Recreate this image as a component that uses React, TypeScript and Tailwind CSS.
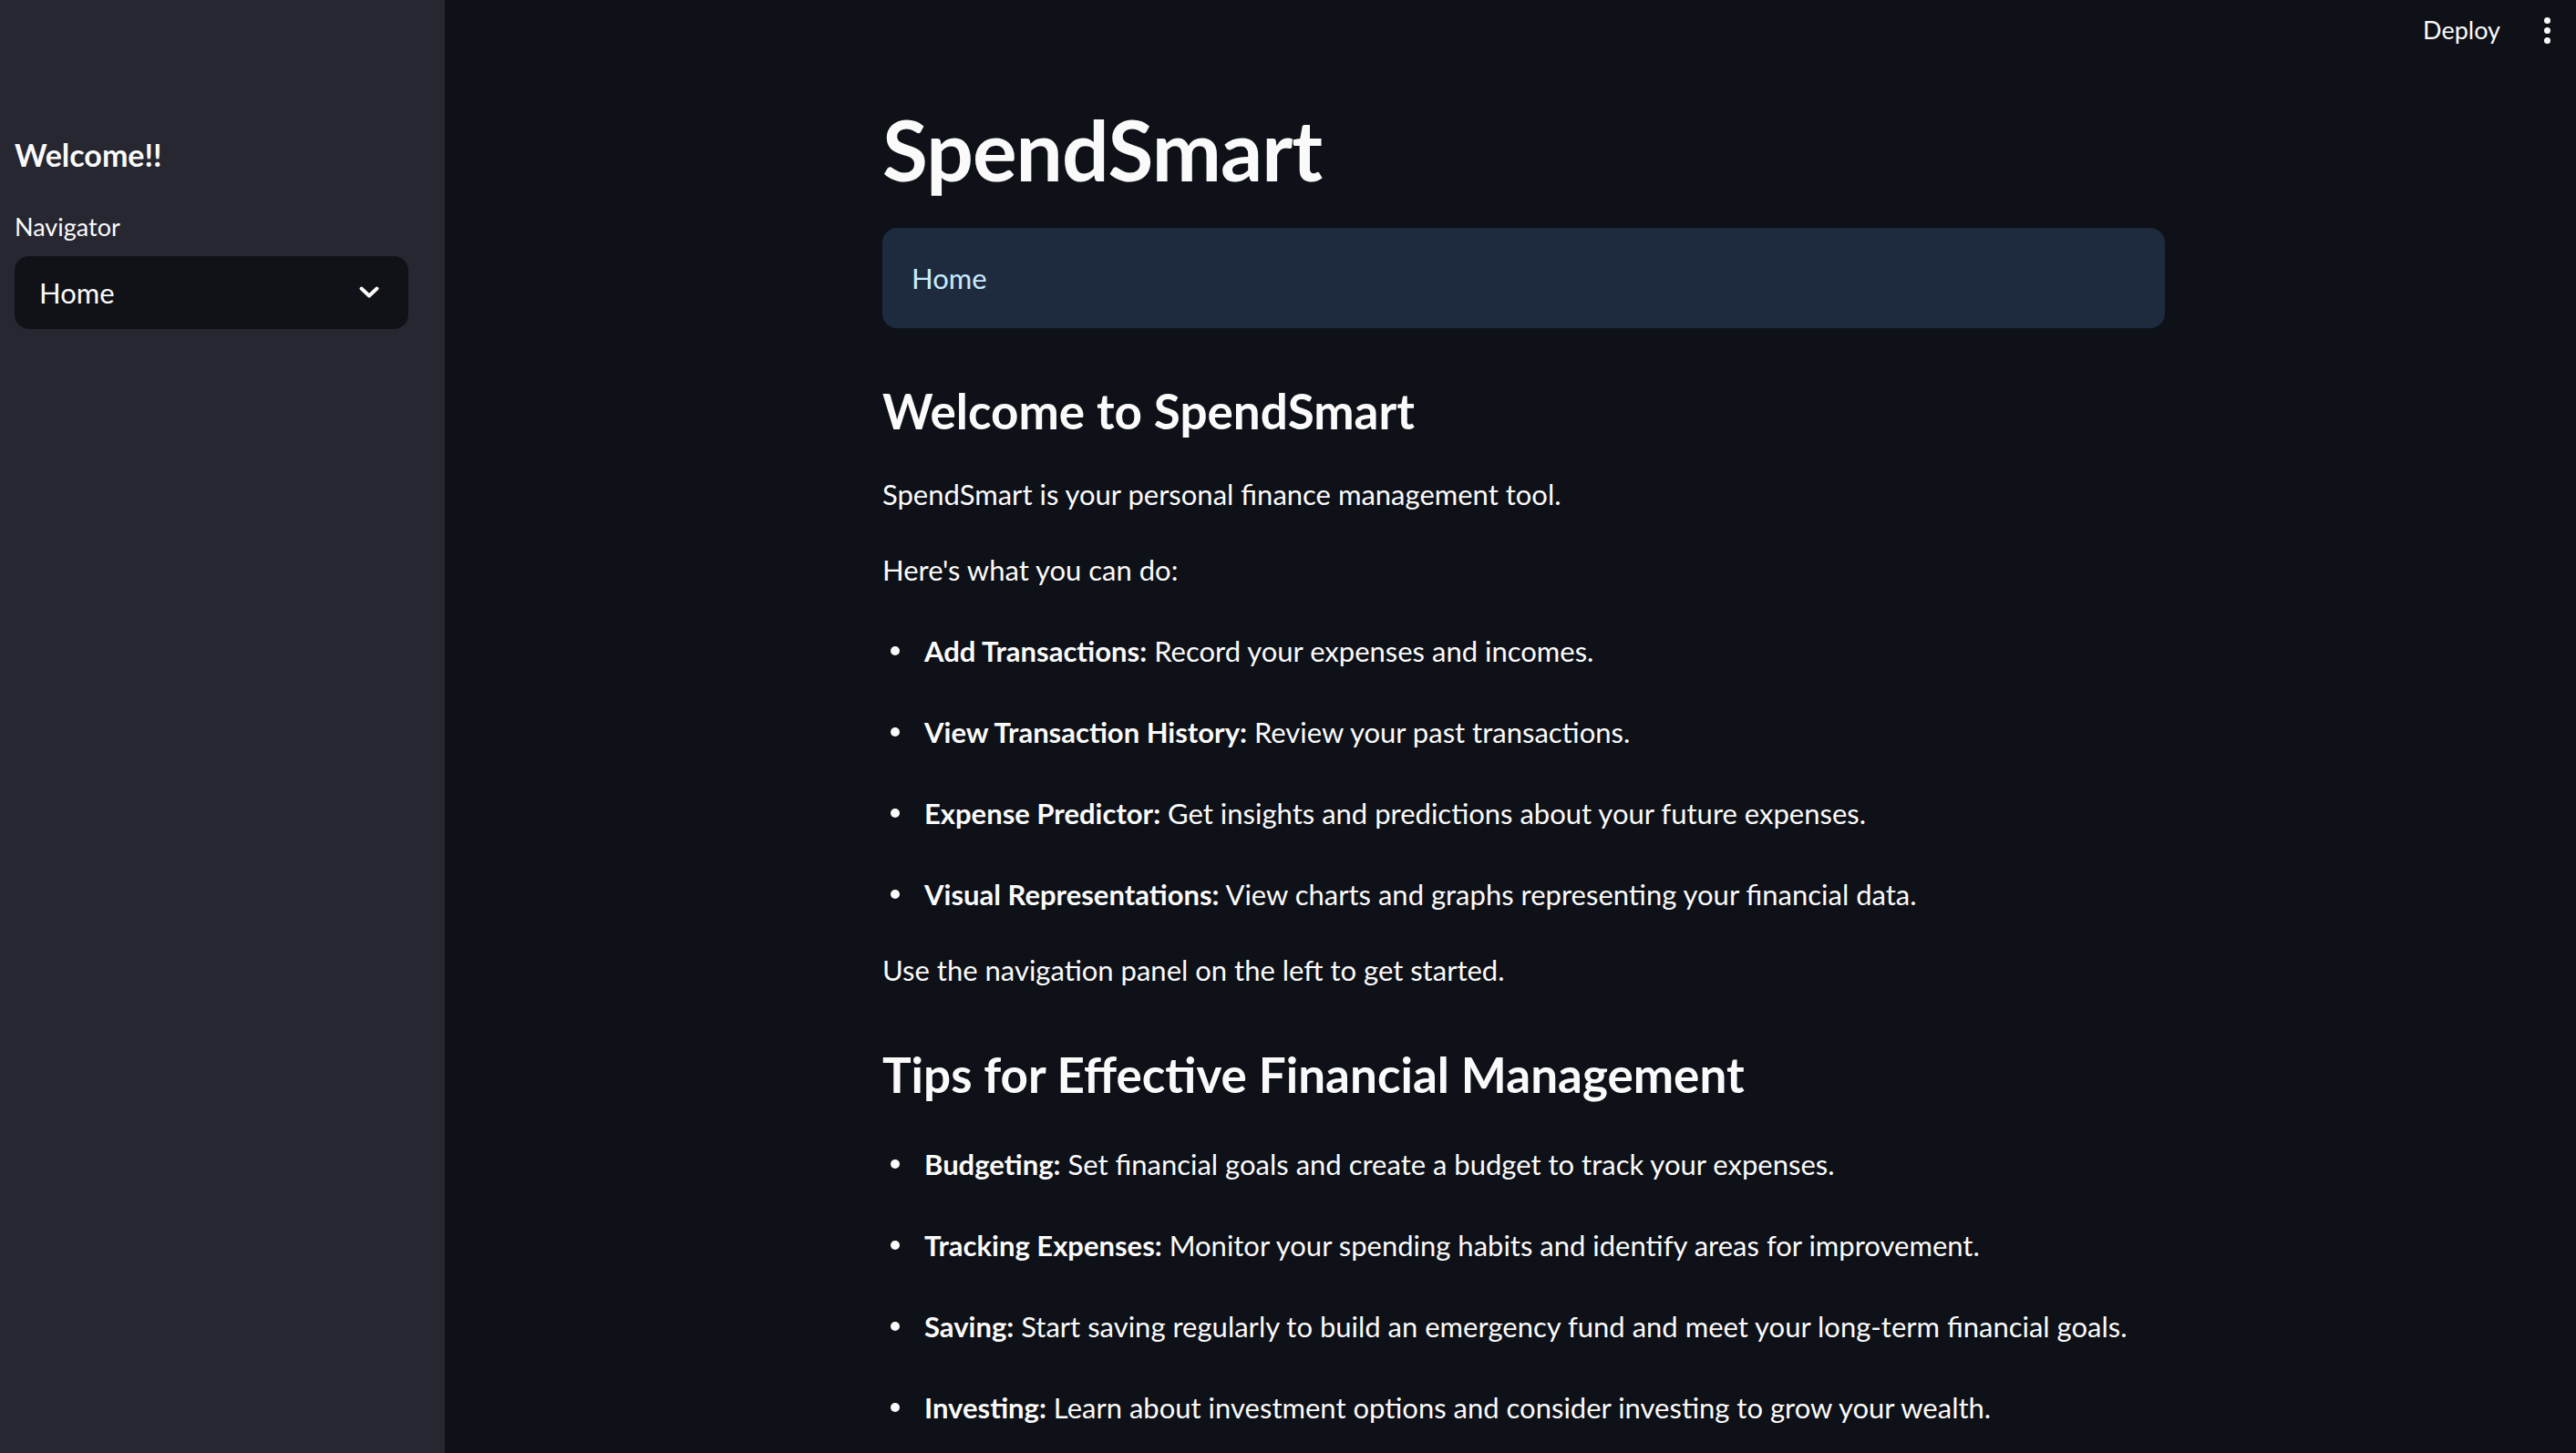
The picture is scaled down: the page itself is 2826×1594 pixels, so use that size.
import React from 'react';

const font = { fontFamily: 'Lato, "Noto Sans", sans-serif' };

const features = [
  { title: 'Add Transactions:', text: 'Record your expenses and incomes.' },
  { title: 'View Transaction History:', text: 'Review your past transactions.' },
  { title: 'Expense Predictor:', text: 'Get insights and predictions about your future expenses.' },
  { title: 'Visual Representations:', text: 'View charts and graphs representing your financial data.' },
];

const tips = [
  { title: 'Budgeting:', text: 'Set financial goals and create a budget to track your expenses.' },
  { title: 'Tracking Expenses:', text: 'Monitor your spending habits and identify areas for improvement.' },
  { title: 'Saving:', text: 'Start saving regularly to build an emergency fund and meet your long-term financial goals.' },
  { title: 'Investing:', text: 'Learn about investment options and consider investing to grow your wealth.' },
];

const BulletList: React.FC<{ items: { title: string; text: string }[] }> = ({ items }) => (
  <ul className="mt-[37px] flex flex-col gap-[37px]">
    {items.map((item) => (
      <li key={item.title} className="flex items-center whitespace-nowrap leading-[52px]">
        <span className="ml-[9px] mr-[27px] h-[10px] w-[10px] shrink-0 rounded-full bg-[#fafafa]" />
        <span>
          <strong className="font-bold">{item.title}</strong> {item.text}
        </span>
      </li>
    ))}
  </ul>
);

export default function App() {
  return (
    <div className="flex h-[1594px] w-full overflow-hidden bg-[#0e1117] text-[#fafafa]" style={font}>
      {/* sidebar */}
      <aside className="w-[488px] shrink-0 bg-[#262730] pl-[16px] pr-[40px] pt-[148px]">
        <div className="text-[34px] font-bold leading-[44px]">Welcome!!</div>
        <div className="mt-[39px] text-[27px] leading-[36px]">Navigator</div>
        <div className="mt-[14px] flex h-[80px] items-center justify-between rounded-[16px] bg-[#111218] pl-[27px] pr-[32px]">
          <span className="text-[31px]">Home</span>
          <svg width="22" height="14" viewBox="0 0 22 14" fill="none">
            <path d="M2.5 2.5 L11 10.5 L19.5 2.5" stroke="#fafafa" strokeWidth="4" strokeLinecap="round" strokeLinejoin="round" />
          </svg>
        </div>
      </aside>

      {/* main */}
      <main className="flex min-w-0 flex-1 flex-col">
        <header className="flex h-[66px] shrink-0 items-center justify-end pr-[28px]">
          <span className="text-[27px]">Deploy</span>
          <span className="ml-[48px] flex flex-col gap-[4px]">
            <span className="h-[7px] w-[7px] rounded-full bg-[#fafafa]" />
            <span className="h-[7px] w-[7px] rounded-full bg-[#fafafa]" />
            <span className="h-[7px] w-[7px] rounded-full bg-[#fafafa]" />
          </span>
        </header>

        <div className="ml-[480px] w-[1407px] shrink-0 text-[31px]">
          <h1 className="mt-[48px] text-[91px] font-bold leading-[100px] tracking-[-0.01em]">SpendSmart</h1>

          <div className="mt-[36px] flex h-[110px] items-center rounded-[16px] bg-[#1e2b3f] px-[32px] text-[#c7ebff]">
            Home
          </div>

          <h3 className="mt-[56px] text-[53px] font-bold leading-[70px]">Welcome to SpendSmart</h3>
          <p className="mt-[30px] leading-[52px]">SpendSmart is your personal finance management tool.</p>
          <p className="mt-[31px] leading-[52px]">Here's what you can do:</p>
          <BulletList items={features} />
          <p className="mt-[31px] leading-[52px]">Use the navigation panel on the left to get started.</p>

          <h3 className="mt-[54px] text-[53px] font-bold leading-[70px]">Tips for Effective Financial Management</h3>
          <BulletList items={tips} />
        </div>
      </main>
    </div>
  );
}
